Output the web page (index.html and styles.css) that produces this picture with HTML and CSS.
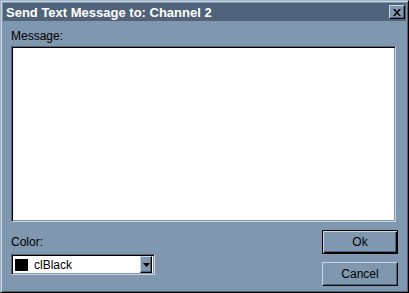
FILE: index.html
```html
<!DOCTYPE html>
<html lang="en">
<head>
  <meta charset="UTF-8">
  <title>Send Text Message</title>
  <link rel="stylesheet" href="styles.css">
</head>
<body>
<div class="window">
  <div class="titlebar">
    <span class="title">Send Text Message to: Channel 2</span>
    <button class="close-btn">
      <svg width="8" height="7" viewBox="0 0 8 7"><path d="M0 0h2l2 2.5L6 0h2L5 3.5 8 7H6L4 4.5 2 7H0l3-3.5z" fill="#000"/></svg>
    </button>
  </div>
  <div class="content">
    <div class="label">Message:</div>
    <div class="memo"></div>
    <div class="bottom-row">
      <div class="color-col">
        <div class="label">Color:</div>
        <div class="combo">
          <span class="swatch"></span>
          <span class="combo-text">clBlack</span>
          <span class="combo-btn">
            <svg width="7" height="4" viewBox="0 0 7 4"><path d="M0 0h7L3.5 4z" fill="#000"/></svg>
          </span>
        </div>
      </div>
      <div class="btn-col">
        <button class="btn default">Ok</button>
        <button class="btn">Cancel</button>
      </div>
    </div>
  </div>
</div>
</body>
</html>
```
FILE: styles.css
```css
* { margin: 0; padding: 0; box-sizing: border-box; }
body { width: 409px; height: 293px; background: #7f97af; font-family: "Liberation Sans", Arial, sans-serif; font-size: 11px; color: #000; }
.window { width: 409px; height: 293px; background: #7f97af; padding: 2px; border-top: 1px solid #9fb3c7; border-left: 1px solid #9fb3c7; border-right: 1px solid #000; border-bottom: 1px solid #000; box-shadow: inset 1px 1px 0 #c8d6e4, inset -1px -1px 0 #4f637a; }
.titlebar { height: 18px; background: #4f637a; display: flex; align-items: center; justify-content: space-between; padding: 0 1px 0 3px; }
.title { color: #fff; font-weight: bold; font-size: 13px; white-space: nowrap; }
.close-btn { width: 16px; height: 14px; background: #7f97af; border-top: 1px solid #c8d6e4; border-left: 1px solid #c8d6e4; border-right: 1px solid #000; border-bottom: 1px solid #000; box-shadow: inset -1px -1px 0 #4f637a; display: flex; align-items: center; justify-content: center; }
.content { padding: 9px 8px 0 8px; }
.label { height: 13px; line-height: 13px; font-size: 12px; }
.memo { height: 176px; margin: 3px 2px 0 0; background: #fff; border-top: 1px solid #4f637a; border-left: 1px solid #4f637a; border-right: 1px solid #c8d6e4; border-bottom: 1px solid #c8d6e4; box-shadow: inset 1px 1px 0 #000, inset -1px -1px 0 #7f97af; }
.bottom-row { display: flex; justify-content: space-between; margin-top: 8px; }
.color-col { padding-top: 6px; }
.combo { width: 144px; height: 21px; margin-top: 5px; background: #fff; display: flex; align-items: center; padding: 2px; border-top: 1px solid #4f637a; border-left: 1px solid #4f637a; border-right: 1px solid #c8d6e4; border-bottom: 1px solid #c8d6e4; box-shadow: inset 1px 1px 0 #000, inset -1px -1px 0 #7f97af; }
.swatch { width: 13px; height: 12px; background: #000; margin-left: 1px; }
.combo-text { flex: 1; margin-left: 6px; font-size: 12px; }
.combo-btn { width: 12px; height: 17px; background: #7f97af; border-top: 1px solid #c8d6e4; border-left: 1px solid #c8d6e4; border-right: 1px solid #000; border-bottom: 1px solid #000; box-shadow: inset -1px -1px 0 #4f637a; display: flex; align-items: center; justify-content: center; }
.btn-col { display: flex; flex-direction: column; gap: 8px; }
.btn { width: 76px; height: 24px; background: #7f97af; font-family: "Liberation Sans", Arial, sans-serif; font-size: 12px; color: #000; border-top: 1px solid #c8d6e4; border-left: 1px solid #c8d6e4; border-right: 1px solid #000; border-bottom: 1px solid #000; box-shadow: inset -1px -1px 0 #4f637a; }
.btn.default { border: 1px solid #000; box-shadow: inset 1px 1px 0 #c8d6e4, inset -1px -1px 0 #000, inset -2px -2px 0 #4f637a; }
```
